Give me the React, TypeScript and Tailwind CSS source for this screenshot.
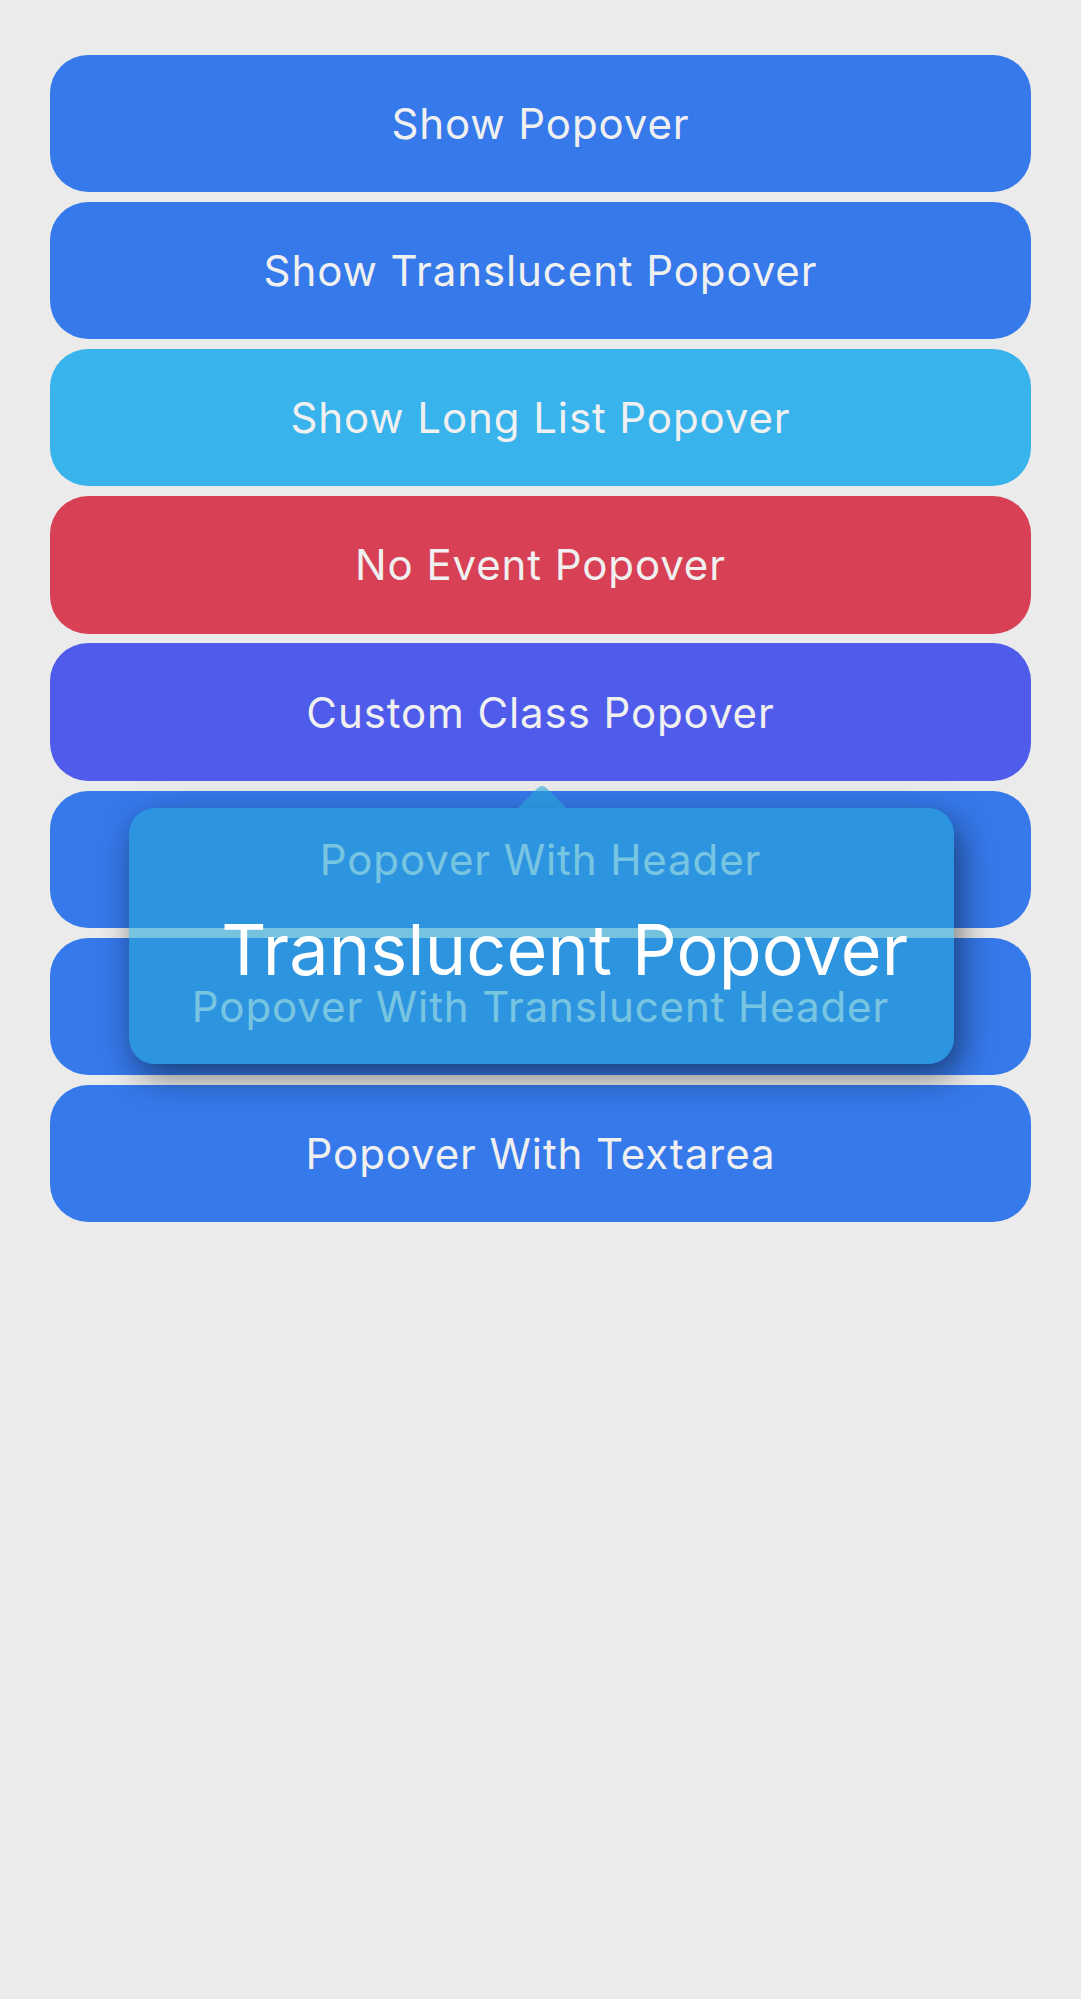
import React from "react";

const buttons: { label: string; cls: string }[] = [
  { label: "Show Popover", cls: "bg-[#3579eb]" },
  { label: "Show Translucent Popover", cls: "bg-[#3579eb]" },
  { label: "Show Long List Popover", cls: "bg-[#39b3ec]" },
  { label: "No Event Popover", cls: "bg-[#d84055]" },
  { label: "Custom Class Popover", cls: "bg-[#4f5beb]" },
  { label: "Popover With Header", cls: "bg-[#3579eb]" },
  { label: "Popover With Translucent Header", cls: "bg-[#3579eb]" },
  { label: "Popover With Textarea", cls: "bg-[#3579eb]" },
];

export default function App() {
  return (
    <div
      className="relative min-h-[1999px] w-full bg-[#ebebeb] overflow-hidden"
      style={{ fontFamily: "Inter, 'Noto Sans', sans-serif" }}
    >
      <div className="flex flex-col gap-[9.8px] px-[49.6px] pt-[54.7px]">
        {buttons.map((b) => (
          <div
            key={b.label}
            className={`${b.cls} h-[137.4px] rounded-[38px] flex items-center justify-center text-[#f0f0f0] text-[42px] tracking-[0.9px]`}
          >
            {b.label}
          </div>
        ))}
      </div>

      {/* Popover overlay */}
      <div className="absolute left-[129.3px] top-[785px] w-[825px]">
        <div className="flex justify-center">
          <svg width="48" height="23" viewBox="0 0 48 23" className="block">
            <path
              d="M0 23 L19 3.5 Q24 -1.5 29 3.5 L48 23 Z"
              fill="rgba(40,168,216,0.6)"
            />
          </svg>
        </div>
        <div className="h-[256px] rounded-[26px] bg-[rgba(40,168,216,0.6)] shadow-[6px_12px_34px_rgba(0,0,0,0.5)] pt-[107px] pl-[92px]">
          <div className="text-white text-[70px] leading-none whitespace-nowrap tracking-[0.2px]">
            Translucent Popover
          </div>
        </div>
      </div>
    </div>
  );
}
